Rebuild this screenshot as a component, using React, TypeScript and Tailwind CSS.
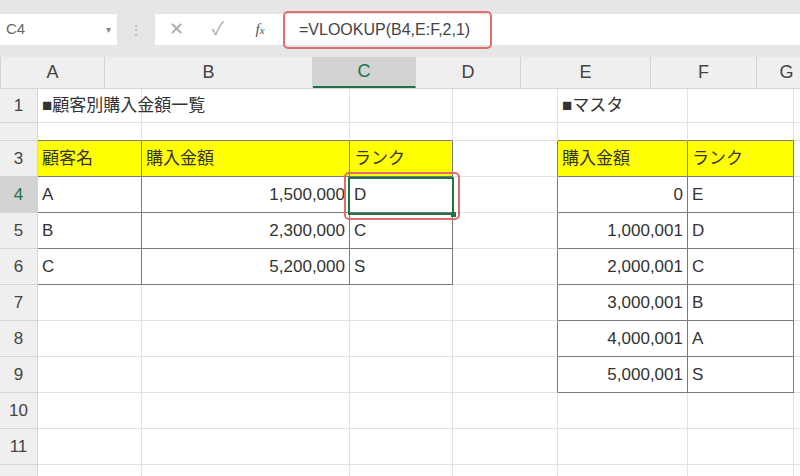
import React from "react";

const cols = [104, 208, 103, 105, 130, 106, 60];
const letters = ["A", "B", "C", "D", "E", "F", "G"];
const heights = [34, 18, 36, 36, 36, 36, 36, 36, 36, 36, 36, 20];
const Y = "bg-[#ffff00]";
type C = { t?: string; r?: boolean; cls?: string; box?: boolean };
const data: Record<number, Record<number, C>> = {
  1: { 0: { t: "■顧客別購入金額一覧" }, 4: { t: "■マスタ" } },
  3: { 0: { t: "顧客名", cls: Y, box: true }, 1: { t: "購入金額", cls: Y, box: true }, 2: { t: "ランク", cls: Y, box: true }, 4: { t: "購入金額", cls: Y, box: true }, 5: { t: "ランク", cls: Y, box: true } },
  4: { 0: { t: "A", box: true }, 1: { t: "1,500,000", r: true, box: true }, 2: { t: "D", box: true }, 4: { t: "0", r: true, box: true }, 5: { t: "E", box: true } },
  5: { 0: { t: "B", box: true }, 1: { t: "2,300,000", r: true, box: true }, 2: { t: "C", box: true }, 4: { t: "1,000,001", r: true, box: true }, 5: { t: "D", box: true } },
  6: { 0: { t: "C", box: true }, 1: { t: "5,200,000", r: true, box: true }, 2: { t: "S", box: true }, 4: { t: "2,000,001", r: true, box: true }, 5: { t: "C", box: true } },
  7: { 4: { t: "3,000,001", r: true, box: true }, 5: { t: "B", box: true } },
  8: { 4: { t: "4,000,001", r: true, box: true }, 5: { t: "A", box: true } },
  9: { 4: { t: "5,000,001", r: true, box: true }, 5: { t: "S", box: true } },
};
const isBox = (r: number, c: number) => !!data[r]?.[c]?.box;

export default function App() {
  return (
    <div className="w-[800px] h-[476px] overflow-hidden bg-white text-[#333] relative" style={{ fontFamily: '"Liberation Sans","Noto Sans CJK JP",sans-serif' }}>
      <div className="h-[57px] bg-[#e6e6e6] flex items-center pt-[2px]">
        <div className="w-[117px] h-[31px] bg-white flex items-center justify-between px-[6px] text-[15px] text-[#666]">
          <span>C4</span><span className="text-[10px] text-[#888]">▾</span>
        </div>
        <div className="w-[38px] text-center text-[#aaa] text-[12px]">⋮</div>
        <div className="flex-1 h-[31px] bg-white flex items-center">
          <span className="w-[42px] text-center text-[#aaa] text-[18px]">✕</span>
          <span className="w-[42px] text-center text-[#aaa] text-[18px]">✓</span>
          <span className="w-[42px] text-center text-[#555] text-[15px] italic" style={{ fontFamily: '"Liberation Serif",serif' }}>f<span className="text-[11px]">x</span></span>
          <div className="ml-[2px] h-[38px] w-[209px] border-2 border-[#e06c6c] rounded-[5px] flex items-center pl-[14px] text-[16px] text-[#444]">=VLOOKUP(B4,E:F,2,1)</div>
        </div>
      </div>
      <div className="flex h-[32px] bg-[#efefef] border-b border-[#d4d4d4]">
        <div className="w-[38px] border-r border-[#d4d4d4] relative overflow-hidden">
          <div className="absolute right-[3px] bottom-[3px] w-0 h-0 border-l-[22px] border-l-transparent border-b-[22px] border-b-[#c6c6c6]" />
        </div>
        {cols.map((w, i) => (
          <div key={i} style={{ width: w }} className={`shrink-0 flex items-center justify-center text-[18px] border-r border-[#d4d4d4] ${i === 2 ? "bg-[#d3d3d3] text-[#217346] border-b-2 border-b-[#217346]" : "text-[#444]"}`}>{letters[i]}</div>
        ))}
      </div>
      {heights.map((h, ri) => {
        const row = ri + 1;
        return (
          <div key={ri} className="flex" style={{ height: h }}>
            <div className={`w-[38px] shrink-0 flex items-center justify-center text-[17px] border-r border-b border-[#d4d4d4] ${row === 4 ? "bg-[#d3d3d3] text-[#217346]" : "bg-[#efefef] text-[#444]"}`}>{h > 20 ? row : ""}</div>
            {cols.map((w, ci) => {
              const c = data[row]?.[ci];
              const dr = isBox(row, ci) || isBox(row, ci + 1);
              const db = isBox(row, ci) || isBox(row + 1, ci);
              return (
                <div key={ci} style={{ width: w }} className={`shrink-0 flex items-center px-[4px] text-[17px] whitespace-nowrap border-r border-b ${dr ? "border-r-[#7a7a7a]" : "border-r-[#e1e1e1]"} ${db ? "border-b-[#7a7a7a]" : "border-b-[#e1e1e1]"} ${c?.r ? "justify-end" : ""} ${c?.cls ?? ""}`}>
                  {c?.t ?? ""}
                </div>
              );
            })}
          </div>
        );
      })}
      <div className="absolute left-[348px] top-[177px] w-[106px] h-[38px] border-2 border-[#217346]" />
      <div className="absolute left-[451px] top-[212px] w-[5px] h-[5px] bg-[#217346]" />
      <div className="absolute left-[344px] top-[172px] w-[116px] h-[48px] border-2 border-[#e06c6c] rounded-[5px]" />
    </div>
  );
}
